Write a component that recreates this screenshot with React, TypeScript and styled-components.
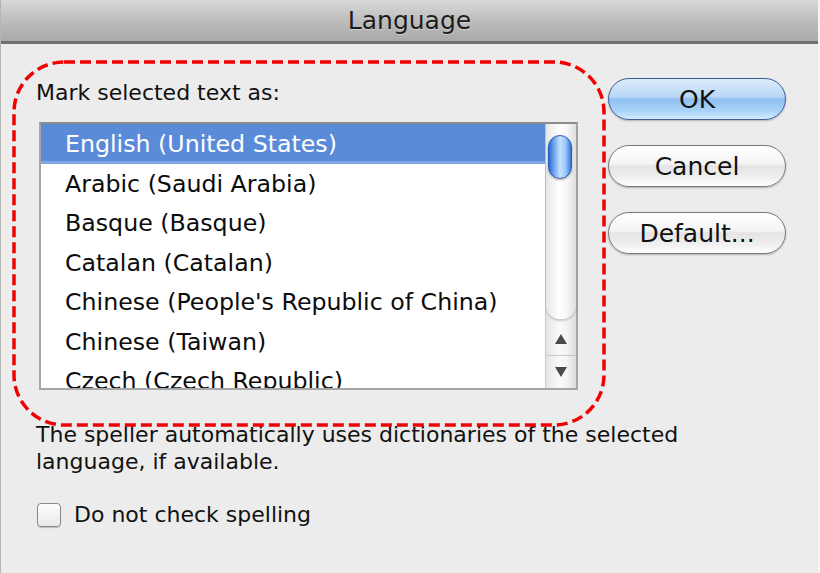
import React from 'react';
import styled, { createGlobalStyle } from 'styled-components';

const GlobalStyle = createGlobalStyle`
  html, body { margin: 0; padding: 0; background: #ececec; }
  body { font-family: "DejaVu Sans", "Liberation Sans", sans-serif; color: #111; }
`;

const Window = styled.div`
  width: 820px;
  height: 573px;
  display: flex;
  flex-direction: column;
  overflow: hidden;
  background: #ececec;
  box-sizing: border-box;
  border-left: 1px solid #b4b4b4;
  border-right: 2px solid #f6f6f6;
`;

const TitleBar = styled.div`
  height: 41px;
  flex: none;
  display: flex;
  align-items: center;
  justify-content: center;
  background: linear-gradient(#d9d9d9, #bdbdbd 50%, #a9a9a9);
  border-bottom: 3px solid #707070;
  font-size: 25px;
  color: #1c1c1c;
  text-shadow: 0 1px 0 rgba(255,255,255,0.4);
`;

const Body = styled.div`
  position: relative;
  flex: 1;
  padding: 34px 0 0 35px;
`;

const MainRow = styled.div`
  display: flex;
  align-items: flex-start;
`;

const LeftColumn = styled.div`
  display: flex;
  flex-direction: column;
  padding-top: 3px;
`;

const Label = styled.div`
  font-size: 22px;
  line-height: 24px;
  height: 24px;
  white-space: nowrap;
`;

const ListBox = styled.div`
  margin: 17px 0 0 3px;
  width: 539px;
  height: 268px;
  box-sizing: border-box;
  border: 2px solid #a6a6a6;
  border-top-color: #8c8c8c;
  background: #fff;
  display: flex;
`;

const Rows = styled.div`
  flex: 1;
  overflow: hidden;
`;

const Row = styled.div<{ $selected?: boolean }>`
  height: 39.5px;
  line-height: 40.5px;
  padding-left: 24px;
  font-size: 23.7px;
  white-space: nowrap;
  color: ${p => (p.$selected ? '#fff' : '#0c0c0c')};
  background: ${p => (p.$selected ? 'linear-gradient(#5a8bd8, #5a8bd8 93%, #7ea7e4 93%)' : 'transparent')};
`;

const ScrollBar = styled.div`
  width: 30px;
  flex: none;
  border-left: 1px solid #c9c9c9;
  display: flex;
  flex-direction: column;
  background: linear-gradient(90deg, #e4e4e4, #fafafa 45%, #f3f3f3 70%, #dcdcdc);
`;

const Track = styled.div`
  flex: 1;
  padding: 11px 0 0 2px;
  border-radius: 0 0 14px 14px;
  background: linear-gradient(90deg, #e6e6e6, #ffffff 45%, #f6f6f6 70%, #dedede);
  box-shadow: 0 2px 2px rgba(0,0,0,0.18);
`;

const Thumb = styled.div`
  width: 24px;
  height: 44px;
  border-radius: 12px;
  box-sizing: border-box;
  border: 1px solid #2a5cb3;
  background: linear-gradient(90deg, #2f6ad3 0%, #74a9ee 25%, #c4e2ff 50%, #9cc9f8 75%, #3a76da 100%);
  box-shadow: 0 1px 2px rgba(0,0,0,0.3);
`;

const ArrowBox = styled.div<{ $top?: boolean }>`
  height: 32px;
  flex: none;
  display: flex;
  align-items: center;
  justify-content: center;
  border-top: ${p => (p.$top ? '0' : '1px solid #c6c6c6')};
  margin-top: ${p => (p.$top ? '4px' : '0')};
`;

const ButtonColumn = styled.div`
  display: flex;
  flex-direction: column;
  gap: 25px;
  margin-left: 30px;
`;

const Button = styled.div<{ $default?: boolean }>`
  width: 178px;
  height: 42px;
  box-sizing: border-box;
  border-radius: 21px;
  display: flex;
  align-items: center;
  justify-content: center;
  font-size: 25px;
  color: #111;
  border: 1.5px solid ${p => (p.$default ? '#3d5e97' : '#7a7a7a')};
  background: ${p =>
    p.$default
      ? 'linear-gradient(#dcebfb 0%, #b9d7f6 45%, #8fc0f0 50%, #a9d2f8 80%, #d4ecfe 100%)'
      : 'linear-gradient(#ffffff 0%, #f4f4f4 45%, #e4e4e4 50%, #f0f0f0 80%, #ffffff 100%)'};
  box-shadow: 0 1px 2px rgba(0,0,0,0.25);
`;

const Description = styled.div`
  margin-top: 31px;
  font-size: 22px;
  line-height: 27px;
  width: 720px;
`;

const CheckRow = styled.div`
  margin: 27px 0 0 1px;
  display: flex;
  align-items: center;
  gap: 13px;
`;

const CheckBox = styled.div`
  width: 24px;
  height: 24px;
  box-sizing: border-box;
  border-radius: 4px;
  border: 1.5px solid #8a8a8a;
  background: linear-gradient(#fdfdfd, #e9e9e9);
  box-shadow: 0 1px 1px rgba(0,0,0,0.2);
`;

const CheckLabel = styled.span`
  font-size: 22px;
`;

const Annotation = styled.svg`
  position: absolute;
  left: 0;
  top: 0;
  pointer-events: none;
`;

const items = [
  'English (United States)',
  'Arabic (Saudi Arabia)',
  'Basque (Basque)',
  'Catalan (Catalan)',
  "Chinese (People's Republic of China)",
  'Chinese (Taiwan)',
  'Czech (Czech Republic)',
];

export default function App() {
  return (
    <>
      <GlobalStyle />
      <Window>
        <TitleBar>Language</TitleBar>
        <Body>
          <MainRow>
            <LeftColumn>
              <Label>Mark selected text as:</Label>
              <ListBox>
                <Rows>
                  {items.map((t, i) => (
                    <Row key={t} $selected={i === 0}>{t}</Row>
                  ))}
                </Rows>
                <ScrollBar>
                  <Track>
                    <Thumb />
                  </Track>
                  <ArrowBox $top>
                    <svg width="14" height="12" viewBox="0 0 14 12"><path d="M7 1 L13 11 L1 11 Z" fill="#4a4a4a" /></svg>
                  </ArrowBox>
                  <ArrowBox>
                    <svg width="14" height="12" viewBox="0 0 14 12"><path d="M1 1 L13 1 L7 11 Z" fill="#4a4a4a" /></svg>
                  </ArrowBox>
                </ScrollBar>
              </ListBox>
            </LeftColumn>
            <ButtonColumn>
              <Button $default>OK</Button>
              <Button>Cancel</Button>
              <Button>Default...</Button>
            </ButtonColumn>
          </MainRow>
          <Description>
            The speller automatically uses dictionaries of the selected
            <br />
            language, if available.
          </Description>
          <CheckRow>
            <CheckBox />
            <CheckLabel>Do not check spelling</CheckLabel>
          </CheckRow>
          <Annotation width="820" height="530" viewBox="0 0 820 530">
            <rect
              x="13"
              y="18"
              width="590"
              height="363"
              rx="50"
              ry="50"
              fill="none"
              stroke="#f00000"
              strokeWidth="3.5"
              strokeDasharray="11 5"
            />
          </Annotation>
        </Body>
      </Window>
    </>
  );
}
